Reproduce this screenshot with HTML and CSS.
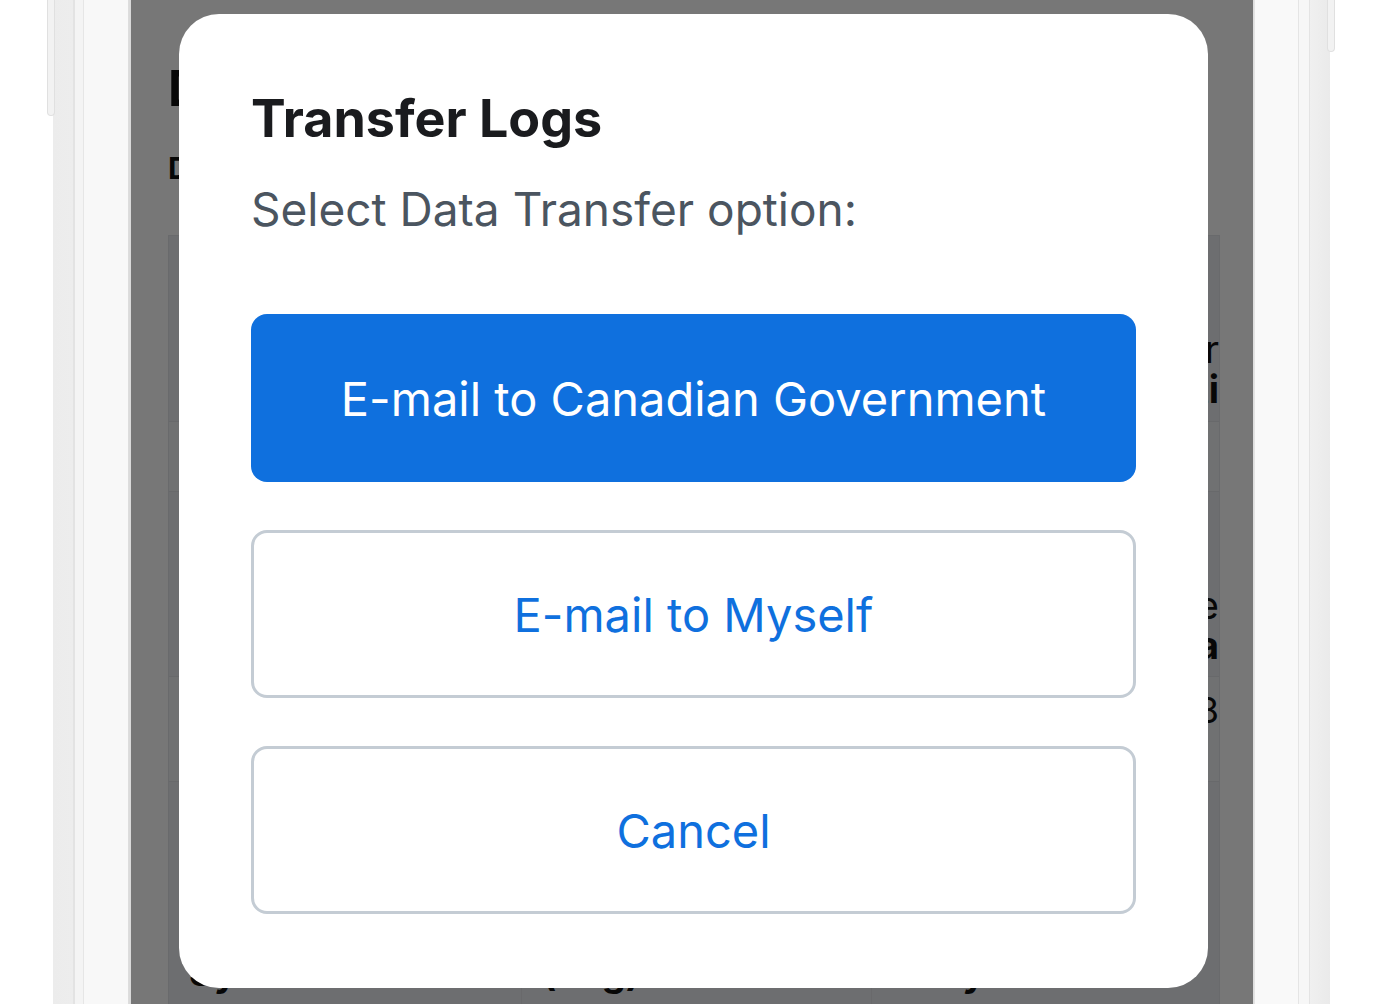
FILE: index.html
```html
<!DOCTYPE html>
<html lang="en">
<head>
<meta charset="utf-8">
<title>Transfer Logs</title>
<link rel="stylesheet" href="styles.css">
</head>
<body>
<div class="device">
  <div class="bezel bezel-left"><span class="side-btn side-btn-left"></span></div>
  <div class="screen">
    <div class="app">
      <h1 class="app-title">Device Logs</h1>
      <h2 class="app-sub">Device: SN 2048-118</h2>
      <div class="log-table">
        <div class="row row-head">
          <div class="cell"></div>
          <div class="cell"></div>
          <div class="cell cell-bold"><span class="l1">Transfer</span><br>Multi</div>
        </div>
        <div class="row row-light">
          <div class="cell"></div><div class="cell"></div><div class="cell"></div>
        </div>
        <div class="row row-head">
          <div class="cell"></div>
          <div class="cell"></div>
          <div class="cell cell-bold"><span class="l1">Retrieve</span><br>Data</div>
        </div>
        <div class="row row-light row-mid">
          <div class="cell"></div><div class="cell"></div><div class="cell cell-reg">2018</div>
        </div>
        <div class="row row-head row-last">
          <div class="cell cell-foot">Sync</div>
          <div class="cell cell-foot">(Log)</div>
          <div class="cell cell-foot">Daily</div>
        </div>
      </div>
    </div>
    <div class="overlay">
      <div class="modal" role="dialog" aria-labelledby="modal-title">
        <h2 class="modal-title" id="modal-title">Transfer Logs</h2>
        <p class="modal-text">Select Data Transfer option:</p>
        <div class="modal-actions">
          <button class="btn btn-primary">E-mail to Canadian Government</button>
          <button class="btn btn-outline">E-mail to Myself</button>
          <button class="btn btn-outline">Cancel</button>
        </div>
      </div>
    </div>
  </div>
  <div class="bezel bezel-right"><span class="side-btn side-btn-right"></span></div>
</div>
</body>
</html>
```
FILE: styles.css
```css
* { box-sizing: border-box; }
html, body { margin: 0; padding: 0; background: #ffffff; }
body {
  width: 1388px;
  height: 1004px;
  overflow: hidden;
  font-family: Inter, "Noto Sans", "Liberation Sans", sans-serif;
}
.device {
  display: flex;
  height: 1004px;
  margin-left: 53px;
}
.bezel {
  position: relative;
  height: 100%;
}
.bezel-left {
  width: 78px;
  background: linear-gradient(to right,
    #ececec 0, #ededed 20px, #e3e3e3 20px, #e3e3e3 22px,
    #f4f4f4 22px, #f4f4f4 30px, #e6e6e6 30px, #e6e6e6 31px,
    #f8f8f8 31px, #f8f8f8 75px, #dedede 75px, #d8d8d8 78px);
}
.bezel-right {
  width: 77px;
  background: linear-gradient(to right,
    #dcdcdc 0, #e6e6e6 2px, #f9f9f9 2px, #f9f9f9 45px,
    #e5e5e5 45px, #e5e5e5 46px, #f7f7f7 46px, #f7f7f7 56px,
    #e4e4e4 56px, #e4e4e4 57px, #f0f0f0 57px, #eaeaea 77px);
}
.side-btn {
  position: absolute;
  top: 0;
  width: 8px;
  background: #f2f2f2;
  border: 1px solid #e0e0e0;
  border-top: none;
}
.side-btn-left { left: -6px; height: 116px; border-radius: 0 0 4px 4px; }
.side-btn-right { right: -5px; height: 52px; border-radius: 0 0 4px 4px; }

.screen {
  position: relative;
  width: 1122px;
  height: 100%;
  overflow: hidden;
  background: #ffffff;
}
.app {
  padding: 56px 33px 0 37px;
  color: #111;
}
.app-title {
  margin: 0;
  font-size: 50px;
  font-weight: 700;
  line-height: 64px;
}
.app-sub {
  margin: 28px 0 0;
  font-size: 30px;
  font-weight: 700;
  line-height: 40px;
}
.log-table {
  margin-top: 47px;
  border: 1px solid #e2e4e8;
}
.row {
  display: grid;
  grid-template-columns: 352px 350px 350px;
}
.row-head { background: #eaecef; height: 185px; }
.row-light { background: #f1f2f4; height: 70px; }
.row-mid { height: 105px; }
.row-last { height: 230px; }
.row + .row { border-top: 1px solid #dfe1e5; }
.cell {
  border-left: 1px solid #e0e2e6;
  padding: 93px 20px 0 20px;
  font-size: 38px;
  line-height: 40px;
  overflow: hidden;
  white-space: nowrap;
}
.cell:first-child { border-left: none; }
.row-light .cell { padding-top: 13px; }
.cell-bold { font-weight: 700; text-align: right; padding-right: 2px; }
.cell-bold .l1 { font-weight: 400; }
.cell-reg { text-align: right; padding-right: 2px; font-size: 36px; }
.cell-foot { padding-top: 170px; font-size: 38px; font-weight: 700; }

.overlay {
  position: absolute;
  inset: 0;
  background: rgba(0, 0, 0, 0.535);
  display: flex;
  align-items: center;
  justify-content: center;
}
.modal {
  width: 1029px;
  height: 974px;
  margin-left: 3px;
  margin-top: -2px;
  background: #ffffff;
  border-radius: 40px;
  padding: 72px 72px 0 72px;
}
.modal-title {
  margin: 0;
  font-size: 52px;
  font-weight: 700;
  line-height: 66px;
  color: #1a1b1e;
  letter-spacing: 0;
}
.modal-text {
  margin: 28px 0 0;
  font-size: 46px;
  line-height: 58px;
  color: #4b5560;
}
.modal-actions {
  margin-top: 76px;
  display: flex;
  flex-direction: column;
  gap: 48px;
}
.btn {
  height: 168px;
  border-radius: 16px;
  font-family: inherit;
  font-size: 47px;
  font-weight: 400;
  cursor: pointer;
}
.btn-primary {
  background: #0f70de;
  border: none;
  color: #ffffff;
}
.btn-outline {
  background: #ffffff;
  border: 3px solid #c4ccd4;
  color: #0f70de;
}
```
